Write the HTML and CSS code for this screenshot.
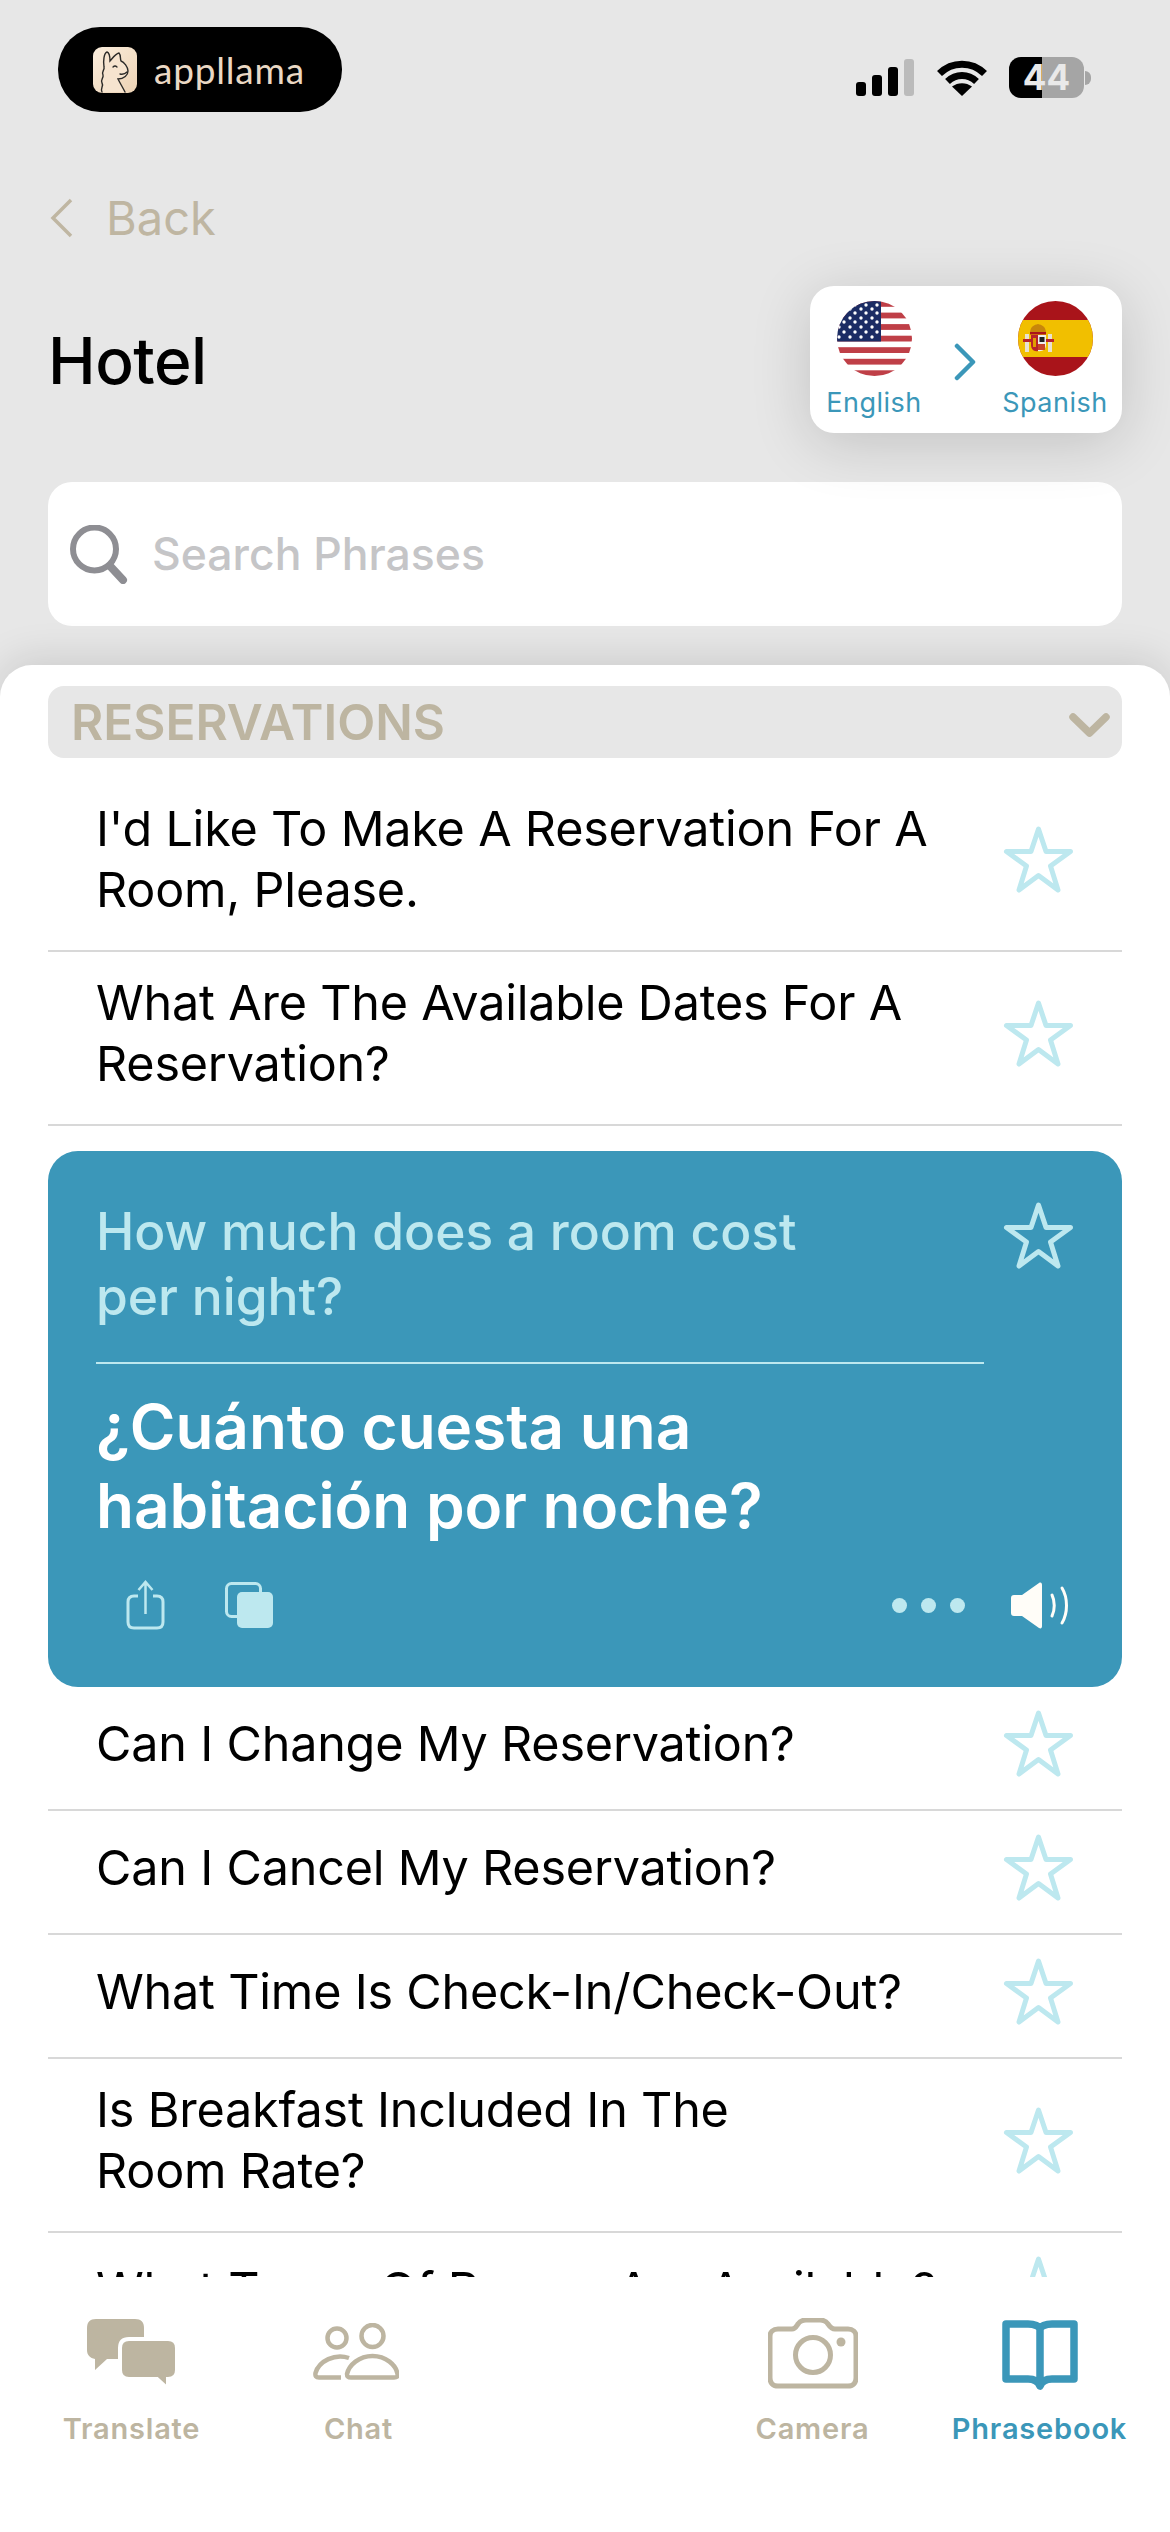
FILE: index.html
```html
<!DOCTYPE html>
<html lang="en">
<head>
    <meta charset="UTF-8">
    <meta name="viewport" content="width=device-width, initial-scale=1.0">
    <title>Phrasebook</title>
    <link rel="stylesheet" href="styles.css">
</head>
<body>
    <svg class="defs" width="0" height="0">
        <symbol id="star" viewBox="0 0 71 67">
            <path d="M35.5 3 L43 25.5 H67.5 L47.5 40 L55 64 L35.5 49.5 L16 64 L23.5 40 L3.5 25.5 H28 Z" fill="none" stroke="currentColor" stroke-width="5" stroke-linejoin="round"/>
        </symbol>
    </svg>

    <div class="top">
        <div class="status-bar">
            <div class="brand-pill">
                <svg class="brand-icon" viewBox="0 0 44 46">
                    <defs>
                        <linearGradient id="logoBg" x1="0" y1="0" x2="1" y2="1">
                            <stop offset="0" stop-color="#fbeedd"/>
                            <stop offset="1" stop-color="#ecd2b4"/>
                        </linearGradient>
                    </defs>
                    <rect width="44" height="46" rx="9" fill="url(#logoBg)"/>
                    <path d="M9 45 C7 41 11 39 9 36 C7 33 11 31 10 28 C8 25 12 23 11 20 C10 14 11 6 14 5 C17 6 17 12 17 14 C19 12 22 7 26 6 C28 8 27 12 28 14 C31 15 35 20 35 24 C35 28 31 32 25 32 C27 36 30 41 32 45" fill="#f6e4cf" stroke="#2b2a28" stroke-width="1.4" stroke-linecap="round"/>
                    <path d="M20 20 Q22 18 24 20 M27 27 Q31 28 34 25" fill="none" stroke="#2b2a28" stroke-width="1.3" stroke-linecap="round"/>
                </svg>
                <span class="brand-name">appllama</span>
            </div>
            <div class="status-icons">
                <div class="signal">
                    <span class="sig-1"></span>
                    <span class="sig-2"></span>
                    <span class="sig-3"></span>
                    <span class="sig-4"></span>
                </div>
                <svg class="wifi" viewBox="0 0 50 37">
                    <path d="M2.5 14.5 C15 2 35 2 47.5 14.5" fill="none" stroke="#000" stroke-width="7"/>
                    <path d="M10.5 22.5 C19 14.5 31 14.5 39.5 22.5" fill="none" stroke="#000" stroke-width="7"/>
                    <path d="M25 37 L15 27.5 C21 23 29 23 35 27.5 Z" fill="#000"/>
                </svg>
                <div class="battery">
                    <div class="battery-body">44</div>
                    <div class="battery-nub"></div>
                </div>
            </div>
        </div>

        <div class="back-row">
            <svg class="back-chevron" viewBox="0 0 23 40">
                <path d="M21 2 L3 20 L21 38" fill="none" stroke="currentColor" stroke-width="3.5"/>
            </svg>
            <span>Back</span>
        </div>

        <div class="title-row">
            <h1>Hotel</h1>
            <div class="lang-box">
                <div class="lang">
                    <svg class="flag" viewBox="0 0 75 75">
                        <defs>
                            <clipPath id="flagClip"><circle cx="37.5" cy="37.5" r="37.5"/></clipPath>
                        </defs>
                        <g clip-path="url(#flagClip)">
                            <rect width="75" height="75" fill="#fff"/>
                            <g fill="#bf3f47">
                                <rect y="0" width="75" height="5.8"/>
                                <rect y="11.6" width="75" height="5.8"/>
                                <rect y="23.1" width="75" height="5.8"/>
                                <rect y="34.7" width="75" height="5.8"/>
                                <rect y="46.2" width="75" height="5.8"/>
                                <rect y="57.8" width="75" height="5.8"/>
                                <rect y="69.3" width="75" height="5.8"/>
                            </g>
                            <rect width="44" height="40.5" fill="#1b2c64"/>
                            <g fill="#fff">
                                <circle cx="18" cy="4" r="1.7"/><circle cx="29" cy="4" r="1.7"/><circle cx="40" cy="4" r="1.7"/>
                                <circle cx="13" cy="8" r="1.7"/><circle cx="24" cy="8" r="1.7"/><circle cx="35" cy="8" r="1.7"/>
                                <circle cx="7" cy="12" r="1.7"/><circle cx="18" cy="12" r="1.7"/><circle cx="29" cy="12" r="1.7"/><circle cx="40" cy="12" r="1.7"/>
                                <circle cx="13" cy="17" r="1.7"/><circle cx="24" cy="17" r="1.7"/><circle cx="35" cy="17" r="1.7"/>
                                <circle cx="7" cy="21" r="1.7"/><circle cx="18" cy="21" r="1.7"/><circle cx="29" cy="21" r="1.7"/><circle cx="40" cy="21" r="1.7"/>
                                <circle cx="2" cy="26" r="1.7"/><circle cx="13" cy="26" r="1.7"/><circle cx="24" cy="26" r="1.7"/><circle cx="35" cy="26" r="1.7"/>
                                <circle cx="7" cy="31" r="1.7"/><circle cx="18" cy="31" r="1.7"/><circle cx="29" cy="31" r="1.7"/><circle cx="40" cy="31" r="1.7"/>
                                <circle cx="2" cy="36" r="1.7"/><circle cx="13" cy="36" r="1.7"/><circle cx="24" cy="36" r="1.7"/><circle cx="35" cy="36" r="1.7"/>
                            </g>
                        </g>
                    </svg>
                    <span>English</span>
                </div>
                <svg class="lang-arrow" viewBox="0 0 22 38">
                    <path d="M3 3 L19 19 L3 35" fill="none" stroke="#3b97b9" stroke-width="4.5" stroke-linecap="round" stroke-linejoin="round"/>
                </svg>
                <div class="lang">
                    <svg class="flag" viewBox="0 0 75 75">
                        <g clip-path="url(#flagClip)">
                            <rect width="75" height="75" fill="#a9141a"/>
                            <rect y="19" width="75" height="37" fill="#f1bf00"/>
                            <rect x="7" y="33" width="4" height="18" fill="#e8e2d0"/>
                            <rect x="30" y="33" width="4" height="18" fill="#e8e2d0"/>
                            <rect x="5" y="38" width="8" height="3" fill="#b8242a"/>
                            <rect x="28" y="38" width="8" height="3" fill="#b8242a"/>
                            <path d="M13 34 H20 V50 C16 51 13 48 13 44 Z" fill="#b8242a"/>
                            <path d="M20 34 H28 V44 C28 48 24 51 20 50 Z" fill="#eee"/>
                            <rect x="21.5" y="36" width="5" height="5" fill="#222"/>
                            <rect x="20" y="43" width="7" height="6" fill="#c8452a"/>
                            <rect x="15" y="37" width="3" height="9" fill="#e0a000"/>
                            <path d="M12 31 C13 25 16 24 20 23 C24 24 27 25 28 31 Z" fill="#c8860a"/>
                            <rect x="12" y="31" width="16" height="2.5" fill="#a9141a"/>
                        </g>
                    </svg>
                    <span>Spanish</span>
                </div>
            </div>
        </div>

        <div class="search">
            <svg class="search-icon" viewBox="0 0 58 59">
                <circle cx="24.5" cy="24" r="21.5" fill="none" stroke="#8e8e93" stroke-width="6"/>
                <path d="M40 41 L53 55" fill="none" stroke="#8e8e93" stroke-width="8" stroke-linecap="round"/>
            </svg>
            <span>Search Phrases</span>
        </div>
    </div>

    <div class="sheet">
        <div class="section-head">
            <span>RESERVATIONS</span>
            <svg class="section-chevron" viewBox="0 0 41 24">
                <path d="M4 4 L20.5 20 L37 4" fill="none" stroke="#bdb5a1" stroke-width="7.5" stroke-linecap="round" stroke-linejoin="round"/>
            </svg>
        </div>

        <div class="list">
            <div class="row">
                <div class="row-text">I'd Like To Make A Reservation For A Room, Please.</div>
                <svg class="star"><use href="#star"/></svg>
            </div>
            <div class="row">
                <div class="row-text">What Are The Available Dates For A Reservation?</div>
                <svg class="star"><use href="#star"/></svg>
            </div>

            <div class="card">
                <div class="card-top">
                    <div class="card-main">
                        <div class="card-question">How much does a room cost<br>per night?</div>
                        <div class="card-answer">¿Cuánto cuesta una<br>habitación por noche?</div>
                    </div>
                    <svg class="star card-star"><use href="#star"/></svg>
                </div>
                <div class="card-actions">
                    <svg class="share-icon" viewBox="0 0 39 50">
                        <path d="M12 16 H8 C4 16 2 18 2 22 V42 C2 46 4 48 8 48 H31 C35 48 37 46 37 42 V22 C37 18 35 16 31 16 H27" fill="none" stroke="#bde8ef" stroke-width="3"/>
                        <path d="M19.5 34 V2 M12.5 10 L19.5 2 L26.5 10" fill="none" stroke="#bde8ef" stroke-width="2.5"/>
                    </svg>
                    <svg class="copy-icon" viewBox="0 0 48 46">
                        <rect x="1.5" y="1.5" width="34" height="33" rx="5" fill="none" stroke="#bde8ef" stroke-width="3"/>
                        <rect x="12" y="10" width="36" height="36" rx="5" fill="#bde8ef"/>
                    </svg>
                    <div class="dots">
                        <span></span>
                        <span></span>
                        <span></span>
                    </div>
                    <svg class="speaker-icon" viewBox="0 0 60 47">
                        <path d="M3 13 H11 L28 1 C30 0 31 1 31 3 V44 C31 46 30 47 28 46 L11 34 H3 C1 34 0 33 0 31 V16 C0 14 1 13 3 13 Z" fill="#fffdf8"/>
                        <path d="M41 13 C44 19 44 28 41 34" fill="none" stroke="#fffdf8" stroke-width="3" stroke-linecap="round"/>
                        <path d="M51 6 C57 16 57 31 51 41" fill="none" stroke="#fffdf8" stroke-width="3" stroke-linecap="round"/>
                    </svg>
                </div>
            </div>

            <div class="row row-short">
                <div class="row-text">Can I Change My Reservation?</div>
                <svg class="star"><use href="#star"/></svg>
            </div>
            <div class="row row-short">
                <div class="row-text">Can I Cancel My Reservation?</div>
                <svg class="star"><use href="#star"/></svg>
            </div>
            <div class="row row-short">
                <div class="row-text">What Time Is Check-In/Check-Out?</div>
                <svg class="star"><use href="#star"/></svg>
            </div>
            <div class="row">
                <div class="row-text">Is Breakfast Included In The<br>Room Rate?</div>
                <svg class="star"><use href="#star"/></svg>
            </div>
            <div class="row row-short">
                <div class="row-text">What Types Of Rooms Are Available?</div>
                <svg class="star"><use href="#star"/></svg>
            </div>
        </div>

        <div class="tab-bar">
            <div class="tab">
                <svg class="tab-icon" viewBox="0 0 90 70" width="90" height="70">
                    <path d="M9 0 H48 C54 0 57 3 57 9 V31 C57 37 54 40 48 40 H20 L8 51 V40 C3 39 0 36 0 31 V9 C0 3 3 0 9 0 Z" fill="#bdb5a1"/>
                    <path d="M42 20 H81 C87 20 90 23 90 29 V51 C90 57 87 60 81 60 V70 L70 60 H42 C36 60 33 57 33 51 V29 C33 23 36 20 42 20 Z" fill="#bdb5a1" stroke="#fff" stroke-width="4"/>
                </svg>
                <span>Translate</span>
            </div>
            <div class="tab">
                <svg class="tab-icon icon-chat" viewBox="0 0 86 57" width="86" height="57">
                    <g fill="none" stroke="#bdb5a1" stroke-width="4.5">
                        <circle cx="24" cy="15" r="9.5"/>
                        <circle cx="59.5" cy="13" r="11"/>
                        <path d="M36 35 C22 30 6 38 2.5 50 C2 53 3 54.5 6 54.5 H28"/>
                        <path d="M59.5 33 C46 33 36 42 34 51 C34 53.5 35 54.5 38 54.5 H81 C84 54.5 85 53.5 84.5 51 C83 42 73 33 59.5 33 Z"/>
                    </g>
                </svg>
                <span>Chat</span>
            </div>
            <div class="tab"></div>
            <div class="tab">
                <svg class="tab-icon icon-camera" viewBox="0 0 90 71" width="90" height="71">
                    <path d="M10 11 H24 C27 11 28 9 30 6 C32 3 34 2 38 2 H52 C56 2 58 3 60 6 C62 9 64 11 67 11 H80 C85 11 88 14 88 18 V60 C88 65 85 68 80 68 H10 C5 68 2 65 2 60 V18 C2 14 5 11 10 11 Z" fill="none" stroke="#bdb5a1" stroke-width="5"/>
                    <circle cx="45" cy="37" r="17.5" fill="none" stroke="#bdb5a1" stroke-width="5"/>
                    <circle cx="73" cy="24" r="4.5" fill="#bdb5a1"/>
                </svg>
                <span>Camera</span>
            </div>
            <div class="tab tab-active">
                <svg class="tab-icon icon-book" viewBox="0 0 76 72" width="76" height="72">
                    <path d="M4 4 H26 C32 4 38 6 38 10 C38 6 44 4 50 4 H72 V59 H50 C44 59 40 61 38 66 C36 61 32 59 26 59 H4 Z M38 10 V62" fill="none" stroke="#3b97b9" stroke-width="7.5" stroke-linejoin="round"/>
                </svg>
                <span>Phrasebook</span>
            </div>
        </div>
    </div>
</body>
</html>
```

FILE: styles.css
```css
* {
    box-sizing: border-box;
}

body {
    margin: 0;
    padding: 0;
    width: 1170px;
    height: 2532px;
    overflow: hidden;
    display: flex;
    flex-direction: column;
    font-family: Inter, "Noto Sans", sans-serif;
    background-color: #e7e7e7;
    color: #000;
}

.defs {
    display: block;
    height: 0;
}

.top {
    height: 665px;
    flex-shrink: 0;
    padding: 27px 48px 0;
}

.status-bar {
    display: flex;
    justify-content: space-between;
    height: 85px;
    margin-left: 10px;
}

.brand-pill {
    display: flex;
    align-items: center;
    width: 284px;
    height: 85px;
    padding-left: 35px;
    background-color: #000;
    border-radius: 42px;
}

.brand-icon {
    width: 44px;
    height: 46px;
}

.brand-name {
    margin-left: 17px;
    font-family: Lato, sans-serif;
    font-size: 37px;
    font-weight: 400;
    letter-spacing: 0.8px;
    color: #ead8c4;
}

.status-icons {
    display: flex;
    align-items: center;
    gap: 23px;
    margin-right: 31px;
    height: 41px;
    margin-top: 30px;
}

.signal {
    display: flex;
    align-items: flex-end;
    gap: 6px;
    height: 37px;
}

.signal span {
    width: 10px;
    background-color: #000;
    border-radius: 3px;
}

.sig-1 { height: 14px; }
.sig-2 { height: 21px; }
.sig-3 { height: 29px; }
.signal .sig-4 { height: 37px; background-color: #bbb; }

.wifi {
    width: 50px;
    height: 37px;
}

.battery {
    display: flex;
    align-items: center;
    margin-left: -1px;
}

.battery-body {
    width: 75px;
    height: 41px;
    border-radius: 12px;
    background: linear-gradient(90deg, #000 44%, #a5a5a5 44%);
    color: #e9e9e9;
    font-size: 35px;
    font-weight: 700;
    line-height: 41px;
    text-align: center;
}

.battery-nub {
    width: 6px;
    height: 14px;
    margin-left: 1px;
    background-color: #a5a5a5;
    border-radius: 0 7px 7px 0;
}

.back-row {
    display: flex;
    align-items: center;
    gap: 33px;
    margin-top: 83px;
    height: 46px;
    margin-left: 2px;
    color: #bfb6a2;
    font-size: 47px;
    line-height: 46px;
}

.back-chevron {
    width: 23px;
    height: 40px;
}

.title-row {
    display: flex;
    align-items: center;
    justify-content: space-between;
    margin-top: 45px;
}

h1 {
    margin: 0;
    padding-top: 2px;
    font-size: 64px;
    font-weight: 500;
    letter-spacing: -0.5px;
}

.lang-box {
    display: flex;
    justify-content: space-between;
    width: 312px;
    height: 147px;
    padding: 15px 12px 0 9px;
    background-color: #fff;
    border-radius: 24px;
    box-shadow: 0 10px 60px rgba(0, 0, 0, 0.16);
}

.lang {
    display: flex;
    flex-direction: column;
    align-items: center;
    width: 110px;
    color: #3b97b9;
    font-size: 27px;
    letter-spacing: 0.5px;
    line-height: 34px;
}

.flag {
    width: 75px;
    height: 75px;
    margin-bottom: 10px;
}

.lang-arrow {
    width: 22px;
    height: 38px;
    margin-top: 42px;
}

.search {
    display: flex;
    align-items: center;
    height: 144px;
    margin-top: 49px;
    padding-left: 22px;
    background-color: #fff;
    border-radius: 24px;
    color: #c5c5c7;
    font-size: 44.5px;
    font-weight: 500;
}

.search-icon {
    width: 58px;
    height: 59px;
    margin-right: 24px;
}

.sheet {
    flex-grow: 1;
    display: flex;
    flex-direction: column;
    min-height: 0;
    padding-top: 21px;
    background-color: #fff;
    border-radius: 32px 32px 0 0;
    box-shadow: 0 -6px 40px rgba(0, 0, 0, 0.12);
    overflow: hidden;
}

.section-head {
    display: flex;
    align-items: center;
    justify-content: space-between;
    flex-shrink: 0;
    height: 72px;
    margin: 0 48px;
    padding: 0 12px 0 23px;
    background-color: #e7e7e7;
    border-radius: 16px;
    color: #bdb5a1;
    font-size: 49.5px;
    font-weight: 600;
}

.section-chevron {
    width: 41px;
    height: 24px;
    margin-top: 5px;
}

.list {
    flex-grow: 1;
    min-height: 0;
    margin: 20px 48px 0;
    overflow: hidden;
}

.row {
    display: flex;
    align-items: center;
    justify-content: space-between;
    height: 174px;
    padding: 0 48px 10px 48px;
    border-bottom: 2px solid #d8d8d8;
}

.row-short {
    height: 124px;
}

.row-text {
    width: 850px;
    font-size: 48.5px;
    line-height: 61px;
    letter-spacing: -0.2px;
}

.star {
    width: 71px;
    height: 67px;
    color: #bde8ef;
    flex-shrink: 0;
}

.card {
    height: 536px;
    margin-top: 25px;
    padding: 48px 48px 0 48px;
    background-color: #3b97b9;
    border-radius: 30px;
}

.card-top {
    display: flex;
    justify-content: space-between;
    align-items: flex-start;
}

.card-star {
    margin-top: 3px;
}

.card-main {
    width: 888px;
}

.card-question {
    padding-bottom: 33px;
    border-bottom: 2px solid #bde8ef;
    color: #bde8ef;
    font-size: 51.5px;
    font-weight: 500;
    line-height: 65px;
}

.card-answer {
    margin-top: 23px;
    color: #fff;
    font-size: 62px;
    font-weight: 600;
    line-height: 79px;
}

.card-actions {
    display: flex;
    align-items: center;
    margin-top: 35px;
    padding-left: 30px;
}

.share-icon {
    width: 39px;
    height: 50px;
}

.copy-icon {
    width: 48px;
    height: 46px;
    margin-left: 60px;
}

.dots {
    display: flex;
    gap: 14px;
    margin-left: auto;
}

.dots span {
    width: 15px;
    height: 15px;
    border-radius: 50%;
    background-color: #bde8ef;
}

.speaker-icon {
    width: 60px;
    height: 47px;
    margin-left: 46px;
    margin-right: 3px;
}

.tab-bar {
    display: grid;
    grid-template-columns: repeat(5, 227px);
    flex-shrink: 0;
    height: 255px;
    padding: 42px 0 0 18px;
    background-color: #fff;
}

.tab {
    display: flex;
    flex-direction: column;
    align-items: center;
    height: 127px;
    justify-content: space-between;
    color: #bdb5a1;
    font-size: 29px;
    font-weight: 600;
    letter-spacing: 0.8px;
}

.tab-active {
    color: #3b97b9;
}

.icon-chat {
    margin: 4px 5px 0 0;
}

.icon-camera {
    margin-top: -1px;
}

.icon-book {
    margin-top: 1px;
}
```
